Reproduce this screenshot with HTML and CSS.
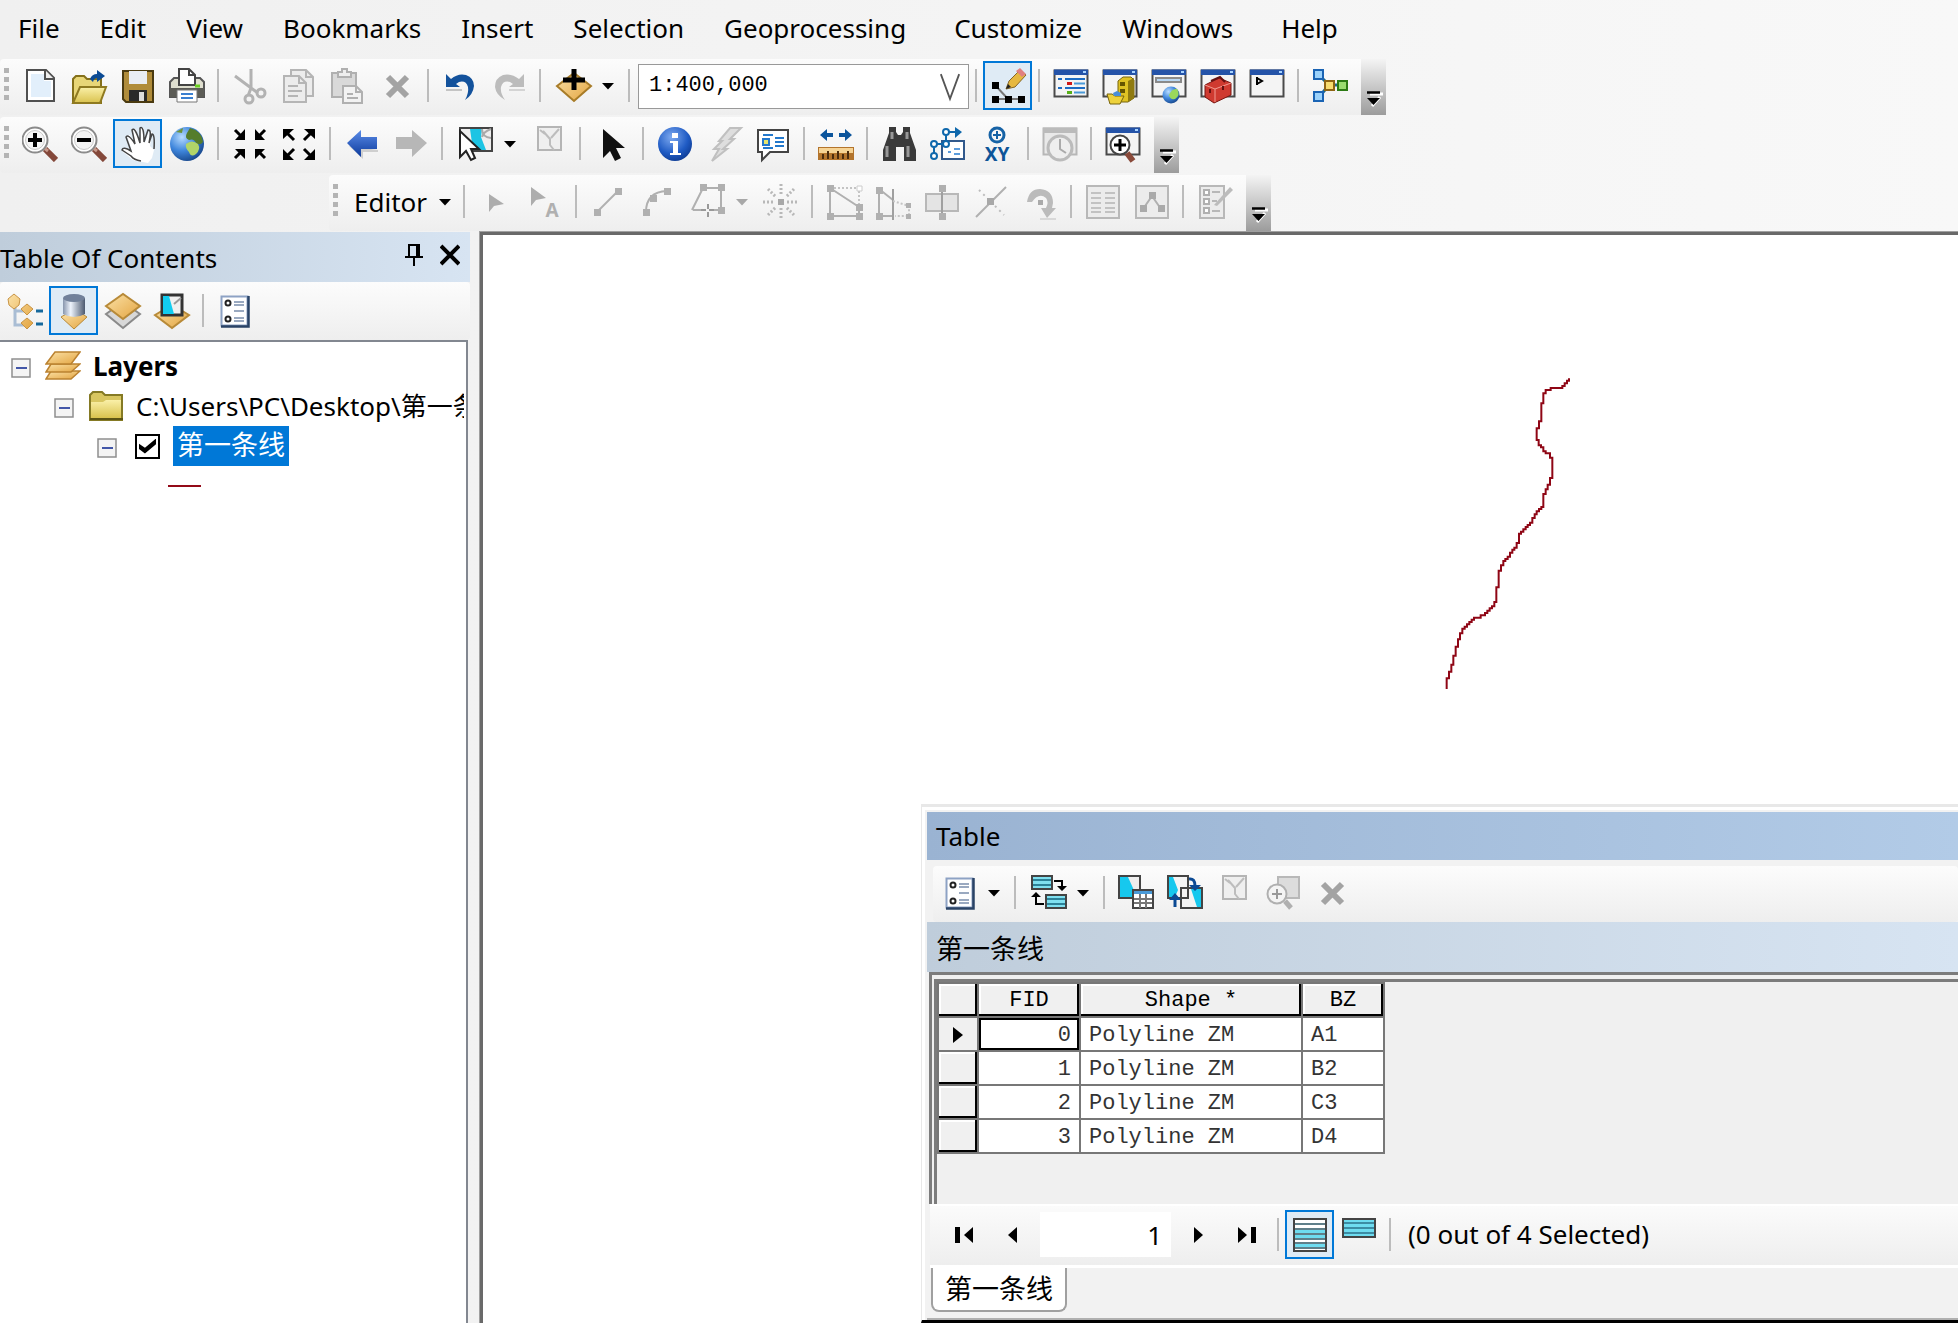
FILE: index.html
```html
<!DOCTYPE html>
<html lang="en">
<head>
<meta charset="utf-8">
<title>Map document</title>
<link rel="stylesheet" href="styles.css">
</head>
<body>
<svg class="defs" aria-hidden="true">
  <defs>
    <linearGradient id="gold" x1="0" y1="0" x2="1" y2="1"><stop offset="0" stop-color="#fbe2a8"/><stop offset="1" stop-color="#e3a440"/></linearGradient>
    <linearGradient id="yellow" x1="0" y1="0" x2="0" y2="1"><stop offset="0" stop-color="#faf0a8"/><stop offset="1" stop-color="#d9c24e"/></linearGradient>
    <linearGradient id="blue" x1="0" y1="0" x2="0" y2="1"><stop offset="0" stop-color="#5b8ce8"/><stop offset="1" stop-color="#0c3a9c"/></linearGradient>
    <linearGradient id="drum" x1="0" y1="0" x2="1" y2="0"><stop offset="0" stop-color="#8796ad"/><stop offset=".35" stop-color="#eef4fc"/><stop offset="1" stop-color="#4c5a70"/></linearGradient>
    <radialGradient id="sea" cx=".35" cy=".3" r=".8"><stop offset="0" stop-color="#b8dcff"/><stop offset=".5" stop-color="#3f86dc"/><stop offset="1" stop-color="#123e80"/></radialGradient>
    <radialGradient id="info" cx=".4" cy=".3" r=".8"><stop offset="0" stop-color="#7eaaf0"/><stop offset=".6" stop-color="#1f5bc4"/><stop offset="1" stop-color="#0a3488"/></radialGradient>
    <symbol id="win" viewBox="0 0 36 36"><path d="M1.500 2.500h33v26h-33z" fill="#f4f4f4" stroke="#4a4a4a" stroke-width="2"/><path d="M1 1.500h34V7H1z" fill="#2453a8"/><path d="M30 3h3v2h-3z" fill="#a9d4ff"/></symbol>
    <symbol id="list" viewBox="0 0 36 36"><path d="M4.500 3.500h26v29h-26z" fill="#fff" stroke="#8da2c4" stroke-width="2"/><path d="M31.500 3v30.500H4" fill="none" stroke="#2a4366" stroke-width="2.500"/><circle cx="11" cy="10" r="2.500" fill="none" stroke="#222" stroke-width="2"/><circle cx="11" cy="26" r="2.500" fill="none" stroke="#222" stroke-width="2"/><path d="M17 9h10M17 12h10M17 18h10M17 25h10M17 28h10" stroke="#9aa9c0" stroke-width="2"/></symbol>
    <symbol id="cross" viewBox="0 0 36 36"><path d="M9 9l19 19M28 9L9 28" stroke="#a3a3a3" stroke-width="6"/></symbol>
    <symbol id="caret" viewBox="0 0 12 8"><path d="M0 1h12L6 7.500z" fill="currentColor"/></symbol>
    <symbol id="more" viewBox="0 0 18 20"><path d="M5 5h13M7 17l8-9" stroke="#fff" stroke-width="3"/><path d="M2 3.500h13" stroke="#000" stroke-width="2.500"/><path d="M2 9h13l-6.500 7z"/></symbol>
    <symbol id="minus" viewBox="0 0 20 20"><path d="M1 1h18v18H1z" fill="#f4f4f4" stroke="#8e8e8e" stroke-width="1.500"/><path d="M5 10h11" stroke="#4357a8" stroke-width="2"/></symbol>
    <symbol id="clear" viewBox="0 0 36 36"><path d="M7 1h23v23H7z" fill="#efefef" stroke="#b5b5b5" stroke-width="2"/><path d="M12 5l7 8v6l4 5M28 3l-8 9M9 4l5 4" fill="none" stroke="#bdbdbd" stroke-width="2"/></symbol>
    <symbol id="lens" viewBox="0 0 36 36"><path d="M23 23l11 11" stroke="#84483a" stroke-width="6"/><path d="M22 22l4 3" stroke="#c89a8c" stroke-width="3"/><circle cx="13" cy="14" r="12.500" fill="#fff" stroke="#8b8b8b" stroke-width="2"/><circle cx="13" cy="14" r="9.500" fill="#f4f4f4" stroke="#c9c9c9"/></symbol>
  </defs>
</svg>

<nav class="menubar" aria-label="Main menu">
  <a href="#">File</a><a href="#">Edit</a><a href="#">View</a><a href="#">Bookmarks</a><a href="#">Insert</a><a href="#">Selection</a><a href="#">Geoprocessing</a><a href="#" class="wide">Customize</a><a href="#">Windows</a><a href="#" class="wide">Help</a>
</nav>

<div class="bars">
<div class="toolbar" role="toolbar" aria-label="Standard">
  <span class="grip"></span>
  <button class="tool" aria-label="New"><svg viewBox="0 0 36 36"><path d="M5 2h19l8 8v23H5z" fill="#fff" stroke="#505050" stroke-width="2"/><path d="M9 6h13v7h7v16H9z" fill="#e2effb"/><path d="M23 2v9h9" fill="#eee" stroke="#505050" stroke-width="2"/></svg></button>
  <button class="tool" aria-label="Open"><svg viewBox="0 0 36 36"><path d="M2 35V11l3-3h8l3 3h14v24z" fill="#e8d677" stroke="#84701a" stroke-width="2"/><path d="M2 35l7-16h26l-6 16z" fill="url(#yellow)" stroke="#8f7a20" stroke-width="2"/><path d="M19 11q2-5 7-5V2l8 6-8 6v-4q-3 0-4 4z" fill="#0b4a94"/></svg></button>
  <button class="tool" aria-label="Save"><svg viewBox="0 0 36 36"><path d="M3 3h30v31H6l-3-3z" fill="#b08c3a" stroke="#4a3a10" stroke-width="2"/><path d="M9 3h18v13H9z" fill="#e9edf3"/><path d="M9 22h18v11H9z" fill="#2a2a2a"/><path d="M19 24h5v9h-5z" fill="#ddd"/></svg></button>
  <button class="tool" aria-label="Print"><svg viewBox="0 0 36 36"><path d="M1 14l4-4h26l4 4v15H1z" fill="#dfdfcf" stroke="#555" stroke-width="2"/><path d="M1 20h34v9H1z" fill="#5c5c56"/><path d="M10 1h10l6 6v10H10z" fill="#fff" stroke="#444" stroke-width="2"/><path d="M20 1v6h6" fill="none" stroke="#444" stroke-width="2"/><path d="M8 22h20v12H8z" fill="#fff" stroke="#777"/><path d="M12 26h12M12 30h12" stroke="#3a7fd0" stroke-width="2"/><path d="M26 18h5" stroke="#6ad020" stroke-width="3"/></svg></button>
  <span class="sep"></span>
  <button class="tool" aria-label="Cut"><svg viewBox="0 0 36 36" fill="none" stroke="#b2b2b2" stroke-width="3"><path d="M3 8l23 17M19 1v19l-3 8"/><circle cx="17" cy="31" r="4"/><circle cx="29" cy="25" r="4"/></svg></button>
  <button class="tool" aria-label="Copy"><svg viewBox="0 0 36 36" fill="#ececec" stroke="#b5b5b5" stroke-width="2"><path d="M10 2h15l7 7v19H10z"/><path d="M3 8h15l7 7v19H3z"/><path d="M18 8v7h7M25 2v7h7M7 18h10M7 23h14M7 28h10" fill="none"/></svg></button>
  <button class="tool" aria-label="Paste"><svg viewBox="0 0 36 36" fill="#d9d9d9" stroke="#b0b0b0" stroke-width="2"><path d="M2 5h24v24H2z"/><path d="M8 4h4V1h5v3h4v5H8z" fill="#eee"/><path d="M13 18h13l6 6v11H13z" fill="#f2f2f2"/><path d="M26 18v6h6M17 26h6M17 30h11" fill="none"/></svg></button>
  <button class="tool" aria-label="Delete"><svg viewBox="0 0 36 36"><use href="#cross"/></svg></button>
  <span class="sep"></span>
  <button class="tool" aria-label="Undo"><svg viewBox="0 0 36 36"><path d="M4 22h16" stroke="#c4c4c4" stroke-width="2"/><path d="M4 6l5 5q7-6 15-4 8 3 8 11-1 9-9 14 4-7 3-13-2-7-9-5l-3 2 4 3H4z" fill="#13529c"/></svg></button>
  <button class="tool" aria-label="Redo"><svg viewBox="0 0 36 36"><path d="M18 22h16" stroke="#d4d4d4" stroke-width="2"/><path d="M33 6l-5 5q-8-6-16-4-8 3-8 12 1 8 10 13-5-7-4-13 2-7 9-5l3 2-4 3h15z" fill="#bcbcbc"/></svg></button>
  <span class="sep"></span>
  <button class="tool drop" aria-label="Add data"><svg viewBox="0 0 36 36"><path d="M1 18L18 5l17 13-17 15z" fill="url(#gold)" stroke="#a87c28" stroke-width="2"/><path d="M18 1v21M7 12h22" stroke="#000" stroke-width="5"/></svg><svg class="caret" viewBox="0 0 12 8"><use href="#caret"/></svg></button>
  <span class="sep"></span>
  <span class="combo"><select aria-label="Map scale"><option>1:400,000</option></select><svg viewBox="0 0 24 30"><path d="M2 1l10 27L22 1" fill="none" stroke="#555" stroke-width="2"/></svg></span>
  <span class="sep"></span>
  <button class="tool on" aria-label="Editor toolbar" aria-pressed="true"><svg viewBox="0 0 36 36"><path d="M5 17l13 14M5 31h27" stroke="#777" stroke-width="2"/><path d="M2 14h7v7H2zM2 28h7v7H2zM15 28h7v7h-7zM28 28h7v7h-7z" fill="#000"/><path d="M16 21l3-8L30 2l6 5-11 12z" fill="#e6b840" stroke="#84662a"/><path d="M30 0l6 6-4 3-6-6z" fill="#e08080"/><path d="M16 21l2-5 3 3z" fill="#222"/></svg></button>
  <span class="sep"></span>
  <button class="tool" aria-label="Table of contents"><svg viewBox="0 0 36 36"><use href="#win"/><path d="M5 11h4M12 11h20M5 20h4M12 20h20" stroke="#1c6cc4" stroke-width="2"/><path d="M14 15.500h5" stroke="#d01818" stroke-width="3"/><path d="M21 15.500h11M21 24.500h11" stroke="#4a9ad8" stroke-width="2"/><path d="M14 24.500h5" stroke="#58b018" stroke-width="3"/></svg></button>
  <button class="tool" aria-label="Catalog"><svg viewBox="0 0 36 36"><use href="#win"/><path d="M16 13l5-4h8l3 3v18l-6 4H16z" fill="#dfc224" stroke="#77640c"/><path d="M26 13l6-3v20l-6 4z" fill="#8f7a10"/><path d="M18 14h5v4h-5zM18 21h5v4h-5z" fill="#665500"/><path d="M5 26h5l3 2h9l-4 8H8z" fill="#eed23c" stroke="#77640c"/><path d="M11 25l4-2 4 2v3h-7z" fill="#4a8ed8"/></svg></button>
  <button class="tool" aria-label="Search"><svg viewBox="0 0 36 36"><use href="#win"/><path d="M5 10h25v4H5z" fill="#b9d8f4" stroke="#8a8a8a" stroke-width="2"/><circle cx="20" cy="27" r="8.500" fill="url(#sea)"/><path d="M18 27q3-7 8-6 4 6-2 10-5 1-6-4z" fill="#9ad85c"/></svg></button>
  <button class="tool" aria-label="Toolbox"><svg viewBox="0 0 36 36"><use href="#win"/><path d="M5 17l14-7 12 5v12L14 35 5 29z" fill="#cf3a30" stroke="#7a1510"/><path d="M5 17l10 4 16-6M15 21v13" fill="none" stroke="#f29a90"/><path d="M11 13l9-4 5 5M10 21v4M23 18v4" fill="none" stroke="#611" stroke-width="2"/></svg></button>
  <button class="tool" aria-label="Python window"><svg viewBox="0 0 36 36"><use href="#win"/><path d="M8 9v8M8 10l5 3-5 3" fill="none" stroke="#000" stroke-width="2"/></svg></button>
  <span class="sep"></span>
  <button class="tool" aria-label="ModelBuilder"><svg viewBox="0 0 36 36"><path d="M7 7l10 10-10 12M17 17h12" fill="none" stroke="#1d6a8a" stroke-width="3"/><path d="M2 2h9v9H2zM2 24h9v9H2z" fill="#9bd2fb" stroke="#1a64b4" stroke-width="2"/><path d="M13 13h9v9h-9z" fill="#f8dc70" stroke="#8f6414" stroke-width="2"/><path d="M26 13h9v9h-9z" fill="#9bdc70" stroke="#2c7a14" stroke-width="2"/></svg></button>
  <button class="more" aria-label="Toolbar options"><svg viewBox="0 0 18 20"><use href="#more"/></svg></button>
</div>

<div class="toolbar" role="toolbar" aria-label="Tools">
  <span class="grip"></span>
  <button class="tool" aria-label="Zoom in"><svg viewBox="0 0 36 36"><use href="#lens"/><path d="M13 7v14M6 14h14" stroke="#000" stroke-width="4"/></svg></button>
  <button class="tool" aria-label="Zoom out"><svg viewBox="0 0 36 36"><use href="#lens"/><path d="M6 14h14" stroke="#000" stroke-width="4"/></svg></button>
  <button class="tool on" aria-label="Pan" aria-pressed="true"><svg viewBox="0 0 36 36"><path d="M13 34L2 25l2-3 8 3L7 10l3-1 5 10-2-15 3-1 4 14V2h4l1 15 4-12 3 1-2 14 4 4-2 8-4 5z" fill="#fff"/><path d="M21 35q-7-1-10-5L2 24q1-4 9 1L6 11q2-4 9 7L12 4q3-4 8 13V2q4-3 4 14l4-12q4-1 1 13l3-9q3 0 2 15" fill="none" stroke="#444" stroke-width="1.500"/></svg></button>
  <button class="tool" aria-label="Full extent"><svg viewBox="0 0 36 36"><circle cx="18" cy="18" r="17" fill="url(#sea)"/><path d="M21 2q12 3 13 14-3 4-7 1-2-5-7-3-5-2-2-7z" fill="#557d2c"/><path d="M17 18q6-5 12 0 3 5-2 10-5 4-7-2-4-4-3-8z" fill="#b1d568"/><path d="M7 6l7-4-1 5z" fill="#6c933a"/></svg></button>
  <span class="sep"></span>
  <button class="tool" aria-label="Fixed zoom in"><svg viewBox="0 0 36 36"><path d="M3 4l8 8M33 4l-8 8M3 32l8-8M33 32l-8-8" stroke="#000" stroke-width="3"/><path d="M13 3v11H3zM23 3v11h10zM13 33V23H3zM23 33V23h10z"/></svg></button>
  <button class="tool" aria-label="Fixed zoom out"><svg viewBox="0 0 36 36"><path d="M5 6l8 8M31 6l-8 8M5 31l8-8M31 31l-8-8" stroke="#000" stroke-width="3"/><path d="M2 13V3h11zM34 13V3H23zM2 23v11h11zM34 23v11H23z"/></svg></button>
  <span class="sep"></span>
  <button class="tool" aria-label="Back"><svg viewBox="0 0 36 36"><path d="M5 20l14 13v-7h15v-2" fill="#cfcfcf"/><path d="M3 17L17 4v7h16v12H17v8z" fill="url(#blue)"/></svg></button>
  <button class="tool" aria-label="Forward"><svg viewBox="0 0 36 36"><path d="M34 17L19 4v7H3v12h16v8z" fill="#b7b7b7"/></svg></button>
  <span class="sep"></span>
  <button class="tool drop" aria-label="Select features"><svg viewBox="0 0 36 36"><path d="M2 2h32v23H2z" fill="#eee" stroke="#444" stroke-width="2"/><path d="M12 3h12l-1 8 5 13H15z" fill="#1cc4e4"/><path d="M24 3q0 8 9 9M33 3q-8 3-9 8" fill="none" stroke="#aaa" stroke-width="2"/><path d="M2 5v26l6-6 5 9 4-2-4-9h8z" fill="#fff" stroke="#222" stroke-width="2"/></svg><svg class="caret" viewBox="0 0 12 8"><use href="#caret"/></svg></button>
  <button class="tool" aria-label="Clear selection"><svg viewBox="0 0 36 36"><use href="#clear"/></svg></button>
  <span class="sep"></span>
  <button class="tool" aria-label="Select elements"><svg viewBox="0 0 36 36"><path d="M9 3v29l7-7 5 10 6-3-5-10h9z" fill="#111"/></svg></button>
  <span class="sep"></span>
  <button class="tool" aria-label="Identify"><svg viewBox="0 0 36 36"><circle cx="18" cy="18" r="17" fill="url(#info)"/><path d="M15 7h6v5h-6zM13 15h8v12h3v2H13v-2h3V17h-3z" fill="#fff"/></svg></button>
  <button class="tool" aria-label="Hyperlink"><svg viewBox="0 0 36 36"><path d="M24 2h11L24 13h4L17 23h4L6 35l7-12H8l8-8h-3z" fill="#dedede" stroke="#c0c0c0" stroke-width="2"/></svg></button>
  <button class="tool" aria-label="HTML popup"><svg viewBox="0 0 36 36"><path d="M3 4h30v22H15l-8 8v-8H3z" fill="#fff" stroke="#444" stroke-width="2"/><path d="M8 9h10M20 12h9M20 16h9M20 20h9M8 22h10" stroke="#2278cc" stroke-width="2"/><path d="M8 13h6v6H8z" fill="#e6e46c" stroke="#2278cc" stroke-width="2"/></svg></button>
  <span class="sep"></span>
  <button class="tool" aria-label="Measure"><svg viewBox="0 0 36 36"><path d="M2 9l7-6v4h6v4H9v4zM34 9l-7-6v4h-6v4h6v4z" fill="#0c559c"/><path d="M0 21h36v13H0z" fill="#b3742c"/><path d="M1 22h34v5H1z" fill="#f6d394"/><path d="M5 33v-5M10 33v-8M15 33v-5M20 33v-8M25 33v-5M30 33v-8" stroke="#4a2a0c" stroke-width="2"/></svg></button>
  <span class="sep"></span>
  <button class="tool" aria-label="Find"><svg viewBox="0 0 36 36"><path d="M8 1h7v5l2 3h3l2-3V1h7v6l6 17v11H23V21h-8v14H2V24L8 7z" fill="#3a3a3a"/><path d="M6 20v11M27 20v11M11 6v7M26 6v7" stroke="#989898" stroke-width="3"/></svg></button>
  <button class="tool" aria-label="Find route"><svg viewBox="0 0 36 36"><path d="M12 15h22v18H12z" fill="#fff" stroke="#31598c" stroke-width="2"/><path d="M4 30V18h12V6h12" fill="none" stroke="#0f68ac" stroke-width="2"/><path d="M25 1l7 5-7 6z" fill="#0f68ac"/><g fill="#fff" stroke="#0f68ac" stroke-width="2"><circle cx="4" cy="30" r="3"/><circle cx="4" cy="18" r="3"/><circle cx="16" cy="18" r="3"/><circle cx="16" cy="6" r="3"/></g><path d="M18 26h3M24 23h6M24 28h6" stroke="#5b9cdc" stroke-width="2"/></svg></button>
  <button class="tool" aria-label="Go to XY"><svg viewBox="0 0 36 36"><circle cx="18" cy="9" r="7" fill="none" stroke="#1763a6" stroke-width="3"/><path d="M18 5v8M14 9h8" stroke="#1763a6" stroke-width="2"/><text x="18" y="35" class="xy">XY</text></svg></button>
  <span class="sep"></span>
  <button class="tool" aria-label="Time slider"><svg viewBox="0 0 36 36"><path d="M1.500 2.500h33v26h-33z" fill="#e9e9e9" stroke="#b7b7b7" stroke-width="2"/><path d="M1 1.500h34V7H1z" fill="#bbb"/><circle cx="18" cy="22" r="12" fill="#eee" stroke="#bbb" stroke-width="3"/><path d="M18 13v10l6 4" fill="none" stroke="#aaa" stroke-width="2"/></svg></button>
  <span class="sep"></span>
  <button class="tool" aria-label="Viewer window"><svg viewBox="0 0 36 36"><use href="#win"/><path d="M22 27l6 8" stroke="#8a4a3a" stroke-width="6"/><circle cx="15" cy="19" r="9.500" fill="#fff" stroke="#444" stroke-width="2"/><path d="M15 13v12M9 19h12" stroke="#000" stroke-width="3"/></svg></button>
  <button class="more" aria-label="Toolbar options"><svg viewBox="0 0 18 20"><use href="#more"/></svg></button>
</div>

<div class="toolbar editor" role="toolbar" aria-label="Editor">
  <span class="grip"></span>
  <button class="menu-button">Editor<svg class="caret" viewBox="0 0 12 8"><use href="#caret"/></svg></button>
  <span class="sep"></span>
  <button class="tool" aria-label="Edit tool" disabled><svg viewBox="0 0 36 36"><path d="M11 10v18l5-6 10-2z" fill="#adadad"/></svg></button>
  <button class="tool" aria-label="Edit annotation tool" disabled><svg viewBox="0 0 36 36"><path d="M4 3v19l5-6 10-2z" fill="#adadad"/><text x="25" y="33" class="ann">A</text></svg></button>
  <span class="sep"></span>
  <button class="tool" aria-label="Straight segment" disabled><svg viewBox="0 0 36 36"><path d="M7 28L28 7" stroke="#b0b0b0" stroke-width="2"/><path d="M4 25h7v7H4zM25 4h7v7h-7z" fill="#b0b0b0"/></svg></button>
  <button class="tool" aria-label="End point arc" disabled><svg viewBox="0 0 36 36"><path d="M7 28q0-20 21-21" fill="none" stroke="#b0b0b0" stroke-width="2"/><path d="M4 25h7v7H4zM11 11h7v7h-7zM25 4h7v7h-7z" fill="#b0b0b0"/></svg></button>
  <button class="tool drop" aria-label="Trace" disabled><svg viewBox="0 0 36 36"><path d="M2 26L13 4h18v22h-9M3 26h11" fill="none" stroke="#b0b0b0" stroke-width="2"/><path d="M10 0h7v7h-7zM28 0h7v7h-7zM28 23h7v7h-7z" fill="#b0b0b0"/><path d="M18 20v13M11 26h14" stroke="#999" stroke-width="2" stroke-dasharray="5 3"/></svg><svg class="caret" viewBox="0 0 12 8"><use href="#caret"/></svg></button>
  <button class="tool" aria-label="Point" disabled><svg viewBox="0 0 36 36"><path d="M15 15h6v6h-6z" fill="#a8a8a8"/><path d="M18 0v12M18 24v12M0 18h12M24 18h12M5 5l8 8M31 5l-8 8M5 31l8-8M31 31l-8-8" stroke="#b8b8b8" stroke-width="3" stroke-dasharray="2 2"/></svg></button>
  <span class="sep"></span>
  <button class="tool" aria-label="Edit vertices" disabled><svg viewBox="0 0 36 36"><path d="M4 4v28h29v-9L4 4" fill="none" stroke="#b0b0b0" stroke-width="2"/><path d="M8 4h25v16" fill="none" stroke="#c4c4c4" stroke-width="2" stroke-dasharray="2 2"/><path d="M1 1h7v7H1zM1 29h7v7H1zM30 29h7v7h-7zM30 20h7v7h-7z" fill="#b0b0b0"/><path d="M31 2h5v5h-5z" fill="#fff" stroke="#ccc"/></svg></button>
  <button class="tool" aria-label="Reshape feature" disabled><svg viewBox="0 0 36 36"><path d="M4 5v27h14M4 5l14 11" fill="none" stroke="#b0b0b0" stroke-width="2"/><path d="M18 5v31" stroke="#a0a0a0" stroke-width="2"/><path d="M18 17l16 5v10H20" fill="none" stroke="#c4c4c4" stroke-width="2" stroke-dasharray="2 2"/><path d="M1 3h7v7H1zM1 29h7v7H1zM31 19h5v5h-5zM31 30h5v5h-5z" fill="#b0b0b0"/></svg></button>
  <button class="tool" aria-label="Cut polygons" disabled><svg viewBox="0 0 36 36"><path d="M2 10h32v17H2z" fill="#e4e4e4" stroke="#b8b8b8" stroke-width="2"/><path d="M18 3v31" stroke="#a0a0a0" stroke-width="2"/><path d="M15 1h7v7h-7zM15 29h7v7h-7z" fill="#b0b0b0"/></svg></button>
  <button class="tool" aria-label="Split tool" disabled><svg viewBox="0 0 36 36"><path d="M3 33L33 3" stroke="#b0b0b0" stroke-width="2"/><path d="M6 6l8 8M22 22l9 9" stroke="#bcbcbc" stroke-width="2" stroke-dasharray="2 4"/><path d="M14 14h7v7h-7z" fill="#a8a8a8"/></svg></button>
  <button class="tool" aria-label="Rotate" disabled><svg viewBox="0 0 36 36"><path d="M5 18Q7 5 18 5q13 1 13 14l-1 5h4l-9 10-6-10h5q3-6 0-10-7-6-14 4z" fill="#bbb"/><path d="M16 16h5v5h-5z" fill="#aaa"/><path d="M18 35h16" stroke="#d8d8d8" stroke-width="2"/></svg></button>
  <span class="sep"></span>
  <button class="tool" aria-label="Attributes" disabled><svg viewBox="0 0 36 36"><path d="M2 2h32v32H2z" fill="#ececec" stroke="#b8b8b8" stroke-width="2"/><path d="M6 9h10M20 9h10M6 14h10M20 14h10M6 19h10M20 19h10M6 24h10M20 24h10M6 28h10M20 28h10" stroke="#c2c2c2" stroke-width="2"/></svg></button>
  <button class="tool" aria-label="Sketch properties" disabled><svg viewBox="0 0 36 36"><path d="M2 2h32v32H2z" fill="#ececec" stroke="#b8b8b8" stroke-width="2"/><path d="M9 25l9-13 9 13" fill="none" stroke="#b0b0b0" stroke-width="2"/><path d="M15 8h7v7h-7zM6 21h7v7H6zM24 21h7v7h-7z" fill="#aaa"/></svg></button>
  <span class="sep"></span>
  <button class="tool" aria-label="Create features" disabled><svg viewBox="0 0 36 36"><path d="M3 2h24v32H3z" fill="#ececec" stroke="#b8b8b8" stroke-width="2"/><path d="M7 6h5v5H7zM7 15h5v5H7zM7 24h5v5H7z" fill="#fff" stroke="#b0b0b0" stroke-width="2"/><path d="M15 8h8M15 17h5M15 27h8" stroke="#b8b8b8" stroke-width="2"/><path d="M17 21L33 3l3 3-16 16z" fill="#bcbcbc"/></svg></button>
  <button class="more" aria-label="Toolbar options"><svg viewBox="0 0 18 20"><use href="#more"/></svg></button>
</div>
</div>

<main class="workspace">
  <aside class="toc">
    <header class="toc-title"><h2>Table Of Contents</h2>
      <button aria-label="Auto hide"><svg viewBox="0 0 20 24"><path d="M5 2h10v12H5zM1 14h18M10 14v9" fill="none" stroke="#000" stroke-width="2"/><path d="M12 2h3v12h-3z"/></svg></button>
      <button aria-label="Close"><svg viewBox="0 0 20 24"><path d="M1 3l18 18M19 3L1 21" stroke="#000" stroke-width="4"/></svg></button>
    </header>
    <div class="toolbar toc-tools" role="toolbar" aria-label="Contents views">
      <button class="tool" aria-label="List by drawing order"><svg viewBox="0 0 36 36"><path d="M8 12v20h10M8 18h12" fill="none" stroke="#a9bdd4" stroke-width="3"/><path d="M1 6l6-5 6 5-1 6-5 4-5-4zM14 16l6-5 6 5-6 6zM14 30l6-5 6 5-6 6z" fill="url(#gold)" stroke="#c89445"/><path d="M29 18h7M29 31h7" stroke="#15689c" stroke-width="3"/></svg></button>
      <button class="tool on" aria-label="List by source" aria-pressed="true"><svg viewBox="0 0 36 36"><path d="M5 24l7-4h13l6 4-13 12z" fill="url(#gold)" stroke="#b88a38"/><path d="M7 5v16q11 6 22 0V5z" fill="url(#drum)"/><ellipse cx="18" cy="5" rx="11" ry="4" fill="#71819a"/></svg></button>
      <button class="tool" aria-label="List by visibility"><svg viewBox="0 0 36 36"><path d="M1 21l17-12 17 12-17 14z" fill="#d8d8d8" stroke="#8a8a8a" stroke-width="2"/><path d="M1 13L18 1l17 12-17 13z" fill="url(#gold)" stroke="#b88a38" stroke-width="2"/></svg></button>
      <button class="tool" aria-label="List by selection"><svg viewBox="0 0 36 36"><path d="M1 22l17-10 17 10-17 13z" fill="url(#gold)" stroke="#b88a38" stroke-width="2"/><path d="M8 2h20v20H8z" fill="#f0f0f0" stroke="#333" stroke-width="3"/><path d="M9 3h6l5 18H9z" fill="#12cdf0"/><path d="M20 11l7-6" stroke="#999" stroke-width="2"/></svg></button>
      <span class="sep"></span>
      <button class="tool" aria-label="Options"><svg viewBox="0 0 36 36"><use href="#list"/></svg></button>
    </div>
    <div class="tree">
      <div class="node"><svg class="minus" viewBox="0 0 20 20"><use href="#minus"/></svg><svg class="icon" viewBox="0 0 36 36"><g fill="url(#gold)" stroke="#bb8230" stroke-width="1.500"><path d="M1 31l5-8h29l-9 8z"/><path d="M1 24l5-8h29l-9 8z"/><path d="M1 16l9-12h25l-9 12z"/></g></svg><strong>Layers</strong></div>
      <div class="node level2"><svg class="minus" viewBox="0 0 20 20"><use href="#minus"/></svg><svg class="icon" viewBox="0 0 36 36"><path d="M2 32V7l3-3h9l3 3h17v25z" fill="#d8c660" stroke="#857a24" stroke-width="2"/><path d="M3 14h12l3-2h15v18H3z" fill="url(#yellow)"/><path d="M2 31h33" stroke="#5c5414" stroke-width="2"/></svg><span class="path">C:\Users\PC\Desktop\第一条线</span></div>
      <div class="node level3"><svg class="minus" viewBox="0 0 20 20"><use href="#minus"/></svg><label class="layer"><input type="checkbox" checked><span class="cjk">第一条线</span></label></div>
      <div class="symbol"></div>
    </div>
  </aside>

  <section class="map" aria-label="Map">
    <svg class="line" viewBox="0 0 660 1080"><path d="M510 85V92H504V100H497V108H490V114H455V120H440V130H433V160H427V214H420V235H413V270H419V286H426V292H433V304H440V310H453V323H460V384H453V404H446V418H440V432H433V471H427V477H420V484H413V493H407V504H400V518H393V525H386V531H380V538H373V545H366V551H360V579H353V593H346V599H340V608H333V620H326V627H319V633H313V646H306V662H299V712H292V756H286V769H279V775H272V782H265V789H258V796H245V803H225V809H218V816H211V823H204V830H197V836H190V850H183V868H177V890H170V917H163V944H157V965H150V985H143V1017"/></svg>

    <section class="window">
      <h2 class="window-title">Table</h2>
      <div class="toolbar table-tools" role="toolbar" aria-label="Table tools">
        <button class="tool drop" aria-label="Table options"><svg viewBox="0 0 36 36"><use href="#list"/></svg><svg class="caret" viewBox="0 0 12 8"><use href="#caret"/></svg></button>
        <span class="sep"></span>
        <button class="tool drop" aria-label="Related tables"><svg viewBox="0 0 36 36"><path d="M1 1h20v13H1zM15 20h20v13H15z" fill="#7fe0f0" stroke="#444" stroke-width="2"/><path d="M2 5h18M2 10h18M16 24h18M16 29h18" stroke="#2c8298" stroke-width="2"/><path d="M23 6h8v7M13 29H5v-8" fill="none" stroke="#000" stroke-width="2"/><path d="M26 11h10l-5 5zM0 22h10l-5-5z"/></svg><svg class="caret" viewBox="0 0 12 8"><use href="#caret"/></svg></button>
        <span class="sep"></span>
        <button class="tool" aria-label="Select by attributes"><svg viewBox="0 0 36 36"><path d="M1 1h21v22H1z" fill="#eee" stroke="#444" stroke-width="2"/><path d="M2 2h8l9 20H2z" fill="#16c8ee"/><path d="M15 15h20v18H15z" fill="#fff" stroke="#444" stroke-width="2"/><path d="M16 16h18v3H16z" fill="#4a9ad8"/><path d="M16 24h18M16 28h18M22 19v14M28 19v14" stroke="#777" stroke-width="2"/></svg></button>
        <button class="tool" aria-label="Switch selection"><svg viewBox="0 0 36 36"><path d="M1 1h20v22H1zM14 13h21v20H14z" fill="#f4f4f4" stroke="#444" stroke-width="2"/><path d="M2 2h4l5 13-3 7H2zM24 14h10v18h-4z" fill="#16c8ee"/><path d="M22 4q6-1 6 7M8 32v-9" fill="none" stroke="#0c4a94" stroke-width="3"/><path d="M22 10h12l-6 6zM2 25h12l-6-7z" fill="#0c4a94"/></svg></button>
        <button class="tool" aria-label="Clear selection"><svg viewBox="0 0 36 36"><use href="#clear"/></svg></button>
        <button class="tool" aria-label="Zoom to selected"><svg viewBox="0 0 36 36"><path d="M13 2h21v21H13z" fill="#dcdcdc" stroke="#b8b8b8" stroke-width="2"/><path d="M20 26l6 7" stroke="#b0b0b0" stroke-width="5"/><circle cx="12" cy="19" r="9.500" fill="#f4f4f4" stroke="#b0b0b0" stroke-width="2"/><path d="M12 14v10M7 19h10" stroke="#999" stroke-width="2"/></svg></button>
        <button class="tool" aria-label="Delete selected"><svg viewBox="0 0 36 36"><use href="#cross"/></svg></button>
      </div>
      <h3 class="layer-title cjk">第一条线</h3>
      <div class="grid">
        <table>
          <thead><tr><th></th><th class="fid">FID</th><th class="shape">Shape *</th><th class="bz">BZ</th></tr></thead>
          <tbody>
            <tr><th class="current"><svg viewBox="0 0 10 16"><path d="M0 0l10 8-10 8z"/></svg></th><td class="num active">0</td><td>Polyline ZM</td><td>A1</td></tr>
            <tr><th></th><td class="num">1</td><td>Polyline ZM</td><td>B2</td></tr>
            <tr><th></th><td class="num">2</td><td>Polyline ZM</td><td>C3</td></tr>
            <tr><th></th><td class="num">3</td><td>Polyline ZM</td><td>D4</td></tr>
          </tbody>
        </table>
      </div>
      <div class="records">
        <button class="tool" aria-label="First record"><svg viewBox="0 0 36 36"><path d="M9 10h5v16H9zM27 10v16l-9-8z"/></svg></button>
        <button class="tool" aria-label="Previous record"><svg viewBox="0 0 36 36"><path d="M22 10v16l-9-8z"/></svg></button>
        <input type="text" value="1" aria-label="Record">
        <button class="tool" aria-label="Next record"><svg viewBox="0 0 36 36"><path d="M14 10v16l9-8z"/></svg></button>
        <button class="tool" aria-label="Last record"><svg viewBox="0 0 36 36"><path d="M9 10v16l9-8zM22 10h5v16h-5z"/></svg></button>
        <span class="sep"></span>
        <button class="tool on" aria-label="Show all records" aria-pressed="true"><svg viewBox="0 0 36 36"><path d="M2 2h32v32H2z" fill="#fff" stroke="#444" stroke-width="2"/><path d="M3 12h30v9H3zM3 25h30v5H3z" fill="#6edcf0"/><path d="M3 7h30M3 12h30M3 17h30M3 22h30M3 26h30M3 31h30" stroke="#5f7f8a" stroke-width="2"/></svg></button>
        <button class="tool" aria-label="Show selected records"><svg viewBox="0 0 36 36"><path d="M2 2h32v18H2z" fill="#6edcf0" stroke="#444" stroke-width="2"/><path d="M3 6h30M3 11h30M3 16h30" stroke="#3c8ca4" stroke-width="2"/></svg></button>
        <span class="sep"></span>
        <span class="count">(0 out of 4 Selected)</span>
      </div>
      <div class="tabs"><button class="tab cjk">第一条线</button></div>
    </section>
  </section>
</main>
</body>
</html>
```
FILE: styles.css
```css
* { box-sizing: border-box; }

body {
  margin: 0;
  min-height: 100vh;
  display: flex;
  flex-direction: column;
  overflow: hidden;
  background: linear-gradient(90deg, #f0f0f0, #f8f8f8);
  color: #000;
  font: 26px/36px "Noto Sans", "Noto Sans CJK SC", sans-serif;
}

h2, h3 { margin: 0; font-size: 26px; font-weight: 400; }
button, select, input { margin: 0; font: inherit; color: inherit; }
button { padding: 0; border: 0; background: none; }
.cjk { font-size: 27px; }
.defs { position: absolute; width: 0; height: 0; }

.menubar { display: flex; gap: 40px; height: 59px; padding: 10px 18px 0; }
.menubar a { color: inherit; text-decoration: none; }
.menubar .wide { margin-left: 8px; }

.bars { display: flex; flex-direction: column; align-items: flex-start; gap: 2px; }
.toolbar {
  display: flex;
  height: 56px;
  padding-top: 2px;
  border-radius: 4px;
  background: linear-gradient(#fcfcfc, #eee);
}
.editor { margin-left: 329px; }

.grip {
  width: 15px;
  height: 34px;
  margin-top: 6px;
  background: repeating-linear-gradient(#b4b4b4 0 5px, transparent 5px 9px) 4px 1px / 5px 33px no-repeat;
}
.sep { flex: none; width: 14px; height: 33px; margin-top: 8px; background: linear-gradient(#bcbcbc, #bcbcbc) 6px 0 / 2px 100% no-repeat; }
.tool { flex: none; display: flex; align-items: center; justify-content: center; width: 49px; height: 49px; }
.tool svg { flex: none; width: 36px; height: 36px; overflow: visible; }
.on { border: 2px solid #0078d7; background: #dfebf5; }
.drop { width: 75px; gap: 10px; }
.tool .caret, .caret { width: 12px; height: 8px; }
.drop:disabled { color: #a8a8a8; }
.menu-button { display: flex; align-items: center; justify-content: center; gap: 12px; width: 113px; height: 49px; padding-left: 4px; }

.more { display: flex; align-items: flex-end; justify-content: center; width: 25px; height: 56px; margin: -2px 0 0 7px; padding-bottom: 6px; background: linear-gradient(#f4f4f4, #9c9c9c); }
.more svg { width: 18px; height: 20px; }
.xy, .ann { font: 700 19px "Noto Sans", sans-serif; text-anchor: middle; }
.xy { fill: #0d5598; }
.ann { fill: #b0b0b0; }

.combo { position: relative; width: 331px; height: 45px; margin: 2px 0 0 2px; }
.combo select { appearance: none; width: 100%; height: 100%; padding: 0 10px; border: 1px solid #999; border-radius: 0; background: #fff; font: 22px/28px "Liberation Mono", monospace; }
.combo svg { position: absolute; right: 8px; top: 9px; width: 22px; height: 30px; pointer-events: none; }

.workspace { flex: 1; display: flex; gap: 10px; min-height: 0; margin-top: 1px; }
.toc { flex: none; display: flex; flex-direction: column; width: 470px; }
.toc-title { display: flex; gap: 16px; height: 50px; padding: 6px 10px 0 0; background: linear-gradient(90deg, #bfcddb, #d7e4f2); }
.toc-title h2 { flex: 1; line-height: 40px; }
.toc-title button { height: 34px; }
.toc-title svg { display: block; width: 20px; height: 24px; }
.toc-tools { padding-top: 4px; height: 58px; }
.tree { flex: 1; width: 468px; border: solid #828790; border-width: 2px 2px 0 0; padding: 4px 2px 0 11px; background: #fff; overflow: hidden; }
.node { display: flex; align-items: center; height: 40px; white-space: nowrap; }
.node svg { flex: none; }
.level2 { margin-left: 43px; }
.level3 { margin-left: 86px; }
.minus { width: 20px; height: 20px; margin-top: 3px; }
.icon { width: 36px; height: 36px; margin: 0 12px 0 14px; }
.path { overflow: hidden; }
.layer { display: flex; align-items: center; gap: 13px; margin-left: 18px; }
.layer input { appearance: none; width: 25px; height: 25px; border: 2px solid #000; background: #fff; }
.layer input:checked::after { content: ""; display: block; width: 17px; height: 15px; margin: 3px 2px; background: #000; clip-path: polygon(0 35%, 35% 62%, 100% 0, 100% 38%, 35% 100%, 0 70%); }
.layer span { height: 40px; padding: 0 4px; background: #0078d7; color: #fff; line-height: 38px; }
.symbol { width: 33px; height: 2px; margin: 19px 0 0 157px; background: #930a18; }

.map { position: relative; flex: 1; border: solid #696969; border-width: 3px 0 0 3px; outline: 1px solid #a0a0a0; background: #fff; }
.line { position: absolute; left: 916px; top: 115px; width: 220px; height: 360px; fill: none; stroke: #8f0615; stroke-width: 6; }

.window { position: absolute; left: 438px; right: 0; top: 569px; bottom: 0; display: flex; flex-direction: column; padding: 5px 0 0 5px; border: solid #e8e8e8; border-width: 3px 0 0 1px; border-bottom: 3px solid #000; background: #f2f2f2; box-shadow: inset 3px 3px #fff; }
.window-title { height: 48px; padding-left: 9px; background: linear-gradient(90deg, #9ab3d2, #b2cbe7); line-height: 48px; }
.table-tools { height: 56px; margin: 6px 0 0 6px; padding-top: 2px; }
.layer-title { height: 50px; padding-left: 9px; background: linear-gradient(90deg, #bfcddb, #d7e4f2); line-height: 53px; }
.grid { flex: 1; min-height: 0; margin-left: 2px; border: double #7c7c7c; border-width: 10px 0 0 8px; background: #f0f0f0; overflow: hidden; }

table { border-collapse: collapse; table-layout: fixed; width: 448px; font: 22px/28px "Liberation Mono", monospace; }
th, td { height: 34px; padding: 3px 8px 0; border: 2px solid #777; background: #fff; color: #333; text-align: left; font-weight: 400; }
th { width: 40px; padding: 2px 0 0; background: #f0f0f0; color: #000; text-align: center; box-shadow: inset -2px -2px #000, inset 2px 2px #fff; }
.fid { width: 102px; }
.shape { width: 222px; }
.bz { width: 82px; }
.current { box-shadow: none; }
.current svg { display: block; width: 10px; height: 16px; margin: auto; }
.num { text-align: right; }
.active { box-shadow: inset 0 0 0 2px #000; }

.records { display: flex; height: 64px; margin-left: 3px; padding: 4px 0 0 9px; border: solid #fff; border-width: 2px 0 3px; background: linear-gradient(#fbfbfb, #eee); }
.records input { width: 131px; height: 45px; margin: 2px 2px 0 3px; padding: 0 9px; border: 0; background: #fff; text-align: right; }
.count { margin-left: 11px; line-height: 49px; }
.tabs { flex: none; height: 52px; padding-left: 4px; border-bottom: 2px solid #b0b0b0; }
.tab { height: 44px; padding: 0 12px; border: 2px solid #a0a0a0; border-top: 0; border-radius: 0 0 8px 8px; background: #fff; }
```
